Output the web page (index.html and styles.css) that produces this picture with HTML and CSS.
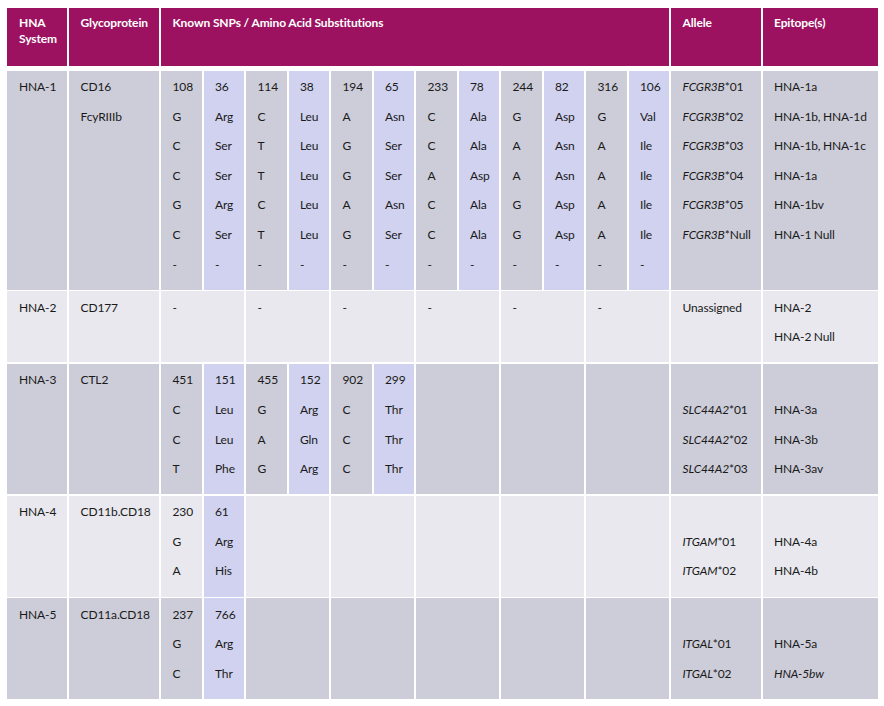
FILE: index.html
```html
<!DOCTYPE html>
<html lang="en">
<head>
<meta charset="utf-8">
<title>HNA Systems</title>
<link rel="stylesheet" href="styles.css">
</head>
<body>
<div class="tbl">
  <div class="hd c1">HNA<br>System</div>
  <div class="hd">Glycoprotein</div>
  <div class="hd span12">Known SNPs / Amino Acid Substitutions</div>
  <div class="hd">Allele</div>
  <div class="hd">Epitope(s)</div>

  <!-- HNA-1 -->
  <div class="cell dark c1"><p>HNA-1</p></div>
  <div class="cell dark"><p>CD16</p><p>FcyRIIIb</p></div>
  <div class="cell dark"><p>108</p><p>G</p><p>C</p><p>C</p><p>G</p><p>C</p><p>-</p></div>
  <div class="cell lav"><p>36</p><p>Arg</p><p>Ser</p><p>Ser</p><p>Arg</p><p>Ser</p><p>-</p></div>
  <div class="cell dark"><p>114</p><p>C</p><p>T</p><p>T</p><p>C</p><p>T</p><p>-</p></div>
  <div class="cell lav"><p>38</p><p>Leu</p><p>Leu</p><p>Leu</p><p>Leu</p><p>Leu</p><p>-</p></div>
  <div class="cell dark"><p>194</p><p>A</p><p>G</p><p>G</p><p>A</p><p>G</p><p>-</p></div>
  <div class="cell lav"><p>65</p><p>Asn</p><p>Ser</p><p>Ser</p><p>Asn</p><p>Ser</p><p>-</p></div>
  <div class="cell dark"><p>233</p><p>C</p><p>C</p><p>A</p><p>C</p><p>C</p><p>-</p></div>
  <div class="cell lav"><p>78</p><p>Ala</p><p>Ala</p><p>Asp</p><p>Ala</p><p>Ala</p><p>-</p></div>
  <div class="cell dark"><p>244</p><p>G</p><p>A</p><p>A</p><p>G</p><p>G</p><p>-</p></div>
  <div class="cell lav"><p>82</p><p>Asp</p><p>Asn</p><p>Asn</p><p>Asp</p><p>Asp</p><p>-</p></div>
  <div class="cell dark"><p>316</p><p>G</p><p>A</p><p>A</p><p>A</p><p>A</p><p>-</p></div>
  <div class="cell lav"><p>106</p><p>Val</p><p>Ile</p><p>Ile</p><p>Ile</p><p>Ile</p><p>-</p></div>
  <div class="cell dark"><p><i>FCGR3B</i>*01</p><p><i>FCGR3B</i>*02</p><p><i>FCGR3B</i>*03</p><p><i>FCGR3B</i>*04</p><p><i>FCGR3B</i>*05</p><p><i>FCGR3B</i>*Null</p></div>
  <div class="cell dark"><p>HNA-1a</p><p>HNA-1b, HNA-1d</p><p>HNA-1b, HNA-1c</p><p>HNA-1a</p><p>HNA-1bv</p><p>HNA-1 Null</p></div>

  <!-- HNA-2 -->
  <div class="cell light c1"><p>HNA-2</p></div>
  <div class="cell light"><p>CD177</p></div>
  <div class="cell light span2"><p>-</p></div>
  <div class="cell light span2"><p>-</p></div>
  <div class="cell light span2"><p>-</p></div>
  <div class="cell light span2"><p>-</p></div>
  <div class="cell light span2"><p>-</p></div>
  <div class="cell light span2"><p>-</p></div>
  <div class="cell light"><p>Unassigned</p></div>
  <div class="cell light"><p>HNA-2</p><p>HNA-2 Null</p></div>

  <!-- HNA-3 -->
  <div class="cell dark c1"><p>HNA-3</p></div>
  <div class="cell dark"><p>CTL2</p></div>
  <div class="cell dark"><p>451</p><p>C</p><p>C</p><p>T</p></div>
  <div class="cell lav"><p>151</p><p>Leu</p><p>Leu</p><p>Phe</p></div>
  <div class="cell dark"><p>455</p><p>G</p><p>A</p><p>G</p></div>
  <div class="cell lav"><p>152</p><p>Arg</p><p>Gln</p><p>Arg</p></div>
  <div class="cell dark"><p>902</p><p>C</p><p>C</p><p>C</p></div>
  <div class="cell lav"><p>299</p><p>Thr</p><p>Thr</p><p>Thr</p></div>
  <div class="cell dark span2"></div>
  <div class="cell dark span2"></div>
  <div class="cell dark span2"></div>
  <div class="cell dark"><p>&nbsp;</p><p><i>SLC44A2</i>*01</p><p><i>SLC44A2</i>*02</p><p><i>SLC44A2</i>*03</p></div>
  <div class="cell dark"><p>&nbsp;</p><p>HNA-3a</p><p>HNA-3b</p><p>HNA-3av</p></div>

  <!-- HNA-4 -->
  <div class="cell light c1"><p>HNA-4</p></div>
  <div class="cell light"><p>CD11b.CD18</p></div>
  <div class="cell light"><p>230</p><p>G</p><p>A</p></div>
  <div class="cell lav"><p>61</p><p>Arg</p><p>His</p></div>
  <div class="cell light span2"></div>
  <div class="cell light span2"></div>
  <div class="cell light span2"></div>
  <div class="cell light span2"></div>
  <div class="cell light span2"></div>
  <div class="cell light"><p>&nbsp;</p><p><i>ITGAM</i>*01</p><p><i>ITGAM</i>*02</p></div>
  <div class="cell light"><p>&nbsp;</p><p>HNA-4a</p><p>HNA-4b</p></div>

  <!-- HNA-5 -->
  <div class="cell dark c1"><p>HNA-5</p></div>
  <div class="cell dark"><p>CD11a.CD18</p></div>
  <div class="cell dark"><p>237</p><p>G</p><p>C</p></div>
  <div class="cell lav"><p>766</p><p>Arg</p><p>Thr</p></div>
  <div class="cell dark span2"></div>
  <div class="cell dark span2"></div>
  <div class="cell dark span2"></div>
  <div class="cell dark span2"></div>
  <div class="cell dark span2"></div>
  <div class="cell dark"><p>&nbsp;</p><p><i>ITGAL</i>*01</p><p><i>ITGAL</i>*02</p></div>
  <div class="cell dark"><p>&nbsp;</p><p>HNA-5a</p><p><i>HNA-5bw</i></p></div>
</div>
</body>
</html>
```
FILE: styles.css
```css
html, body {
  margin: 0;
  padding: 0;
  background: #ffffff;
}
body {
  padding: 8px 6px 0 7px;
  font-family: Lato, "Liberation Sans", sans-serif;
  font-size: 12px;
  letter-spacing: -0.12px;
  color: #1a1a1a;
}
.tbl {
  display: grid;
  width: 871px;
  grid-template-columns: 60px 90px repeat(12, 40.5px) 89.5px 115.5px;
  column-gap: 2px;
  row-gap: 1.5px;
}
.hd {
  background: #9c1260;
  color: #ffffff;
  font-weight: bold;
  line-height: 16px;
  height: 57.5px;
  box-sizing: border-box;
  padding: 7px 4px 0 11.5px;
  margin-bottom: 3.5px;
}
.hd.c1 { padding-left: 12px; }
.span12 { grid-column: span 12; }
.span2 { grid-column: span 2; }
.cell {
  padding: 1.5px 2px 10.5px 11.5px;
  line-height: 29.6px;
  white-space: nowrap;
  word-spacing: -0.5px;
}
.cell.c1 { padding-left: 12px; }
.cell p { margin: 0; }
.cell i { font-style: italic; }
.dark { background: #cdcdd9; }
.light { background: #e8e8ee; }
.lav { background: #d1d2ef; }
```
